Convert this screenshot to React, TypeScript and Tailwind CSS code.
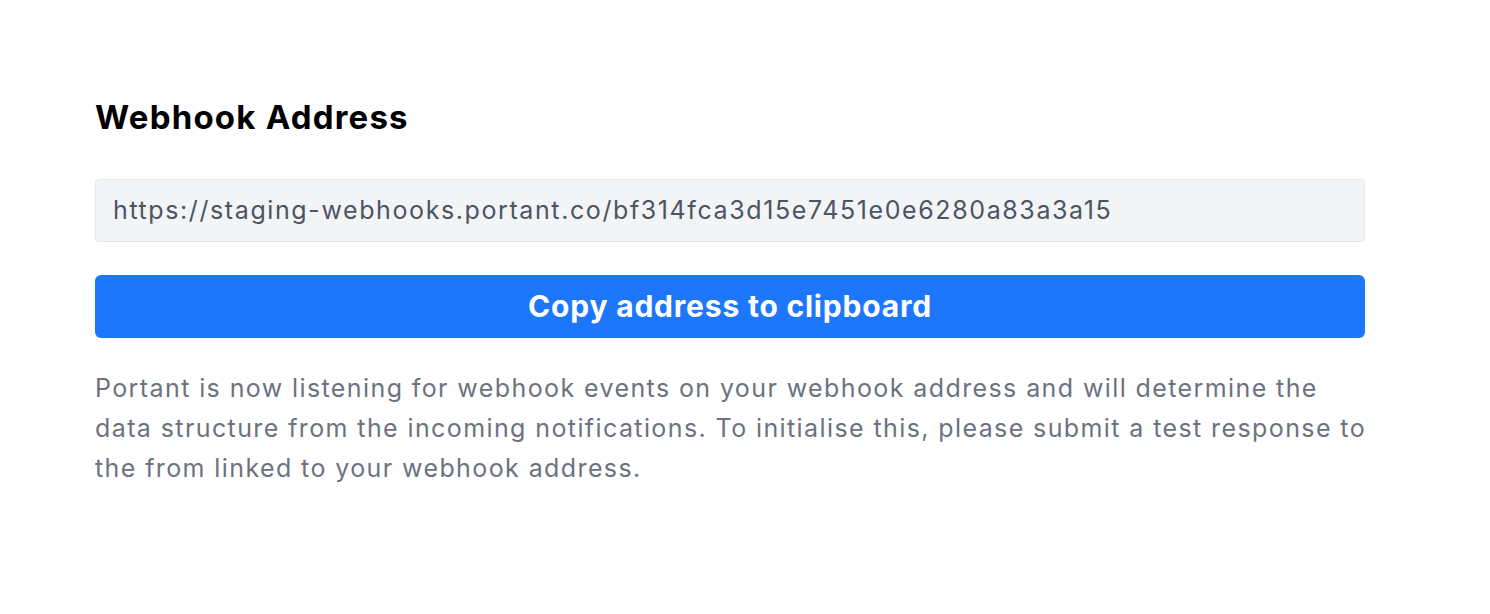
import React from 'react';

const WEBHOOK_URL = 'https://staging-webhooks.portant.co/bf314fca3d15e7451e0e6280a83a3a15';

export default function App() {
  return (
    <div className="min-h-screen bg-white font-['Inter',sans-serif]">
      <div className="w-[1270px] ml-[95px] pt-[95px]">
        <h1 className="text-[33px] leading-[44px] font-bold text-black tracking-[1.2px]">Webhook Address</h1>

        <div className="mt-[40px] h-[63px] flex items-center px-[17px] bg-[#f3f4f6] border border-[#e5e7eb] rounded-[4px] text-[25px] tracking-[1.6px] text-[#4b5563]">
          {WEBHOOK_URL}
        </div>

        <button className="mt-[33px] w-full h-[63px] rounded-[6px] bg-[#1c77fd] text-white text-[30px] font-bold tracking-[0.8px]">
          Copy address to clipboard
        </button>

        <p className="mt-[30px] w-[1280px] text-[25px] leading-[40px] tracking-[1.4px] text-[#6b7280]">
          Portant is now listening for webhook events on your webhook address and will determine the data structure from the incoming notifications. To initialise this, please submit a test response to the from linked to your webhook address.
        </p>
      </div>
    </div>
  );
}
